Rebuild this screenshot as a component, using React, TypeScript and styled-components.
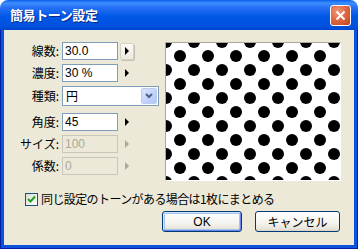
import React from "react";
import styled, { createGlobalStyle } from "styled-components";

const GlobalStyle = createGlobalStyle`
    html, body {
        margin: 0;
        padding: 0;
        background: #ffffff;
    }
    body {
        font-family: "Noto Sans CJK JP", sans-serif;
    }
`;

const Window = styled.div`
    width: 358px;
    height: 249px;
    display: flex;
    flex-direction: column;
    border-radius: 8px 8px 0 0;
    overflow: hidden;
`;

const TitleBar = styled.div`
    height: 30px;
    flex: none;
    display: flex;
    align-items: center;
    justify-content: space-between;
    padding: 0 7px 0 10px;
    box-sizing: border-box;
    background: linear-gradient(
        to bottom,
        #0a5fe6 0%,
        #3b8fff 10%,
        #2770f5 25%,
        #0057e6 55%,
        #0052df 85%,
        #0045cf 100%
    );
    h1 {
        margin: 0;
        font-size: 13px;
        font-weight: 700;
        letter-spacing: -0.4px;
        color: #ffffff;
        line-height: 30px;
        text-shadow: 1px 1px 0 #0a2a8a;
    }
`;

const CloseButton = styled.div`
    width: 21px;
    height: 21px;
    box-sizing: border-box;
    border: 1px solid #ffffff;
    border-radius: 3px;
    background: radial-gradient(circle at 35% 30%, #ee9a7c 0%, #df6a45 45%, #c4421d 100%);
    display: flex;
    align-items: center;
    justify-content: center;
`;

const Frame = styled.div`
    flex: 1;
    display: flex;
    padding: 0 4px 4px;
    background: #0b52dc;
    box-shadow: inset 1px 0 0 #0021a8, inset -1px 0 0 #0021a8, inset 0 -1px 0 #0021a8;
`;

const Client = styled.div`
    flex: 1;
    display: flex;
    flex-direction: column;
    background: #ece9d8;
    padding: 12px 13px 0 10px;
`;

const Body = styled.div`
    display: flex;
    justify-content: space-between;
    align-items: flex-start;
`;

const Form = styled.div`
    display: flex;
    flex-direction: column;
    gap: 4px;
`;

const FieldRow = styled.div<{ $gapTop?: number; $tall?: boolean }>`
    display: grid;
    grid-template-columns: 45px 59px 16px;
    align-items: center;
    height: ${p => (p.$tall ? 20 : 18)}px;
    margin-top: ${p => p.$gapTop || 0}px;
`;

const Label = styled.label`
    text-align: right;
    font-size: 12px;
    line-height: 18px;
    color: #000000;
    white-space: nowrap;
`;

const TextBox = styled.input<{ disabled?: boolean }>`
    justify-self: end;
    width: 56px;
    height: 18px;
    box-sizing: border-box;
    margin: 0;
    padding: 0 2px;
    border: 1px solid ${p => (p.disabled ? "#c9c7ba" : "#7f9db9")};
    background: ${p => (p.disabled ? "#ece9d8" : "#ffffff")};
    color: ${p => (p.disabled ? "#aca899" : "#000000")};
    font-family: "Liberation Sans", Arial, sans-serif;
    font-size: 12px;
    outline: none;
`;

const ArrowButton = styled.span<{ $raised?: boolean; $disabled?: boolean }>`
    justify-self: end;
    width: 14px;
    height: 17px;
    box-sizing: border-box;
    display: flex;
    align-items: center;
    justify-content: center;
    border: 1px solid ${p => (p.$raised ? "#d6d2c2" : "transparent")};
    border-radius: 2px;
    background: ${p => (p.$raised ? "linear-gradient(#fbfbf9, #ebe8dc)" : "transparent")};
    box-shadow: ${p => (p.$raised ? "1px 1px 0 #c3c0b2" : "none")};
    &::after {
        content: "";
        border-left: 4px solid ${p => (p.$disabled ? "#aca899" : "#000000")};
        border-top: 4px solid transparent;
        border-bottom: 4px solid transparent;
    }
`;

const Combo = styled.div`
    grid-column: 2 / span 2;
    justify-self: end;
    margin-right: -25px;
    width: 97px;
    height: 20px;
    box-sizing: border-box;
    border: 1px solid #7f9db9;
    background: #ffffff;
    display: flex;
    align-items: center;
    justify-content: space-between;
    padding: 0 1px 0 3px;
    font-size: 12px;
    span {
        line-height: 18px;
    }
`;

const ComboButton = styled.div`
    width: 16px;
    height: 16px;
    box-sizing: border-box;
    border: 1px solid #bccbf0;
    border-radius: 2px;
    background: linear-gradient(135deg, #dbe5fd 0%, #c0d2fb 60%, #b1c6f6 100%);
    display: flex;
    align-items: center;
    justify-content: center;
`;

const Preview = styled.div`
    width: 176px;
    height: 139px;
    box-sizing: border-box;
    border: 1px solid;
    border-color: #aca899 #ffffff #ffffff #aca899;
    background: #ffffff;
    svg {
        display: block;
    }
`;

const CheckRow = styled.div`
    display: flex;
    align-items: center;
    gap: 3px;
    margin-top: 11px;
    padding-left: 11px;
    font-size: 12px;
    letter-spacing: -0.6px;
    line-height: 14px;
    white-space: nowrap;
`;

const CheckBox = styled.span`
    width: 13px;
    height: 13px;
    box-sizing: border-box;
    border: 1px solid #1c5180;
    background: linear-gradient(135deg, #dcdcd7 0%, #ffffff 100%);
    display: flex;
    align-items: center;
    justify-content: center;
`;

const ButtonRow = styled.div`
    display: flex;
    justify-content: flex-end;
    gap: 13px;
    margin-top: 5px;
    padding-right: 1px;
`;

const PushButton = styled.button<{ $default?: boolean; $width: number }>`
    width: ${p => p.$width}px;
    height: 21px;
    margin: 0;
    padding: 0;
    box-sizing: border-box;
    border: 1px solid #003c74;
    border-radius: 3px;
    background: linear-gradient(to bottom, #ffffff 0%, #f4f3ee 60%, #e6e3d8 90%, #d6d0c5 100%);
    box-shadow: ${p =>
        p.$default ? "inset 1px 1px 0 #cee7ff, inset -1px -1px 0 #6982ee, inset 0 0 0 2px #a6c2f3" : "none"};
    font-family: "Liberation Sans", "Noto Sans CJK JP", sans-serif;
    font-size: 12px;
    color: #000000;
`;

const Dots: React.FC = () => (
    <svg width="174" height="137" viewBox="0 0 174 137">
        <defs>
            <pattern id="tone" x="0" y="-1" width="28" height="28" patternUnits="userSpaceOnUse">
                <circle cx="0" cy="0" r="6" fill="#000" />
                <circle cx="28" cy="0" r="6" fill="#000" />
                <circle cx="0" cy="28" r="6" fill="#000" />
                <circle cx="28" cy="28" r="6" fill="#000" />
                <circle cx="14" cy="14" r="6" fill="#000" />
            </pattern>
        </defs>
        <rect width="174" height="137" fill="url(#tone)" />
    </svg>
);

export default function App() {
    return (
        <>
            <GlobalStyle />
            <Window>
                <TitleBar>
                    <h1>簡易トーン設定</h1>
                    <CloseButton>
                        <svg width="11" height="11" viewBox="0 0 11 11">
                            <path d="M1.5 1.5 L9.5 9.5 M9.5 1.5 L1.5 9.5" stroke="#fff" strokeWidth="2" />
                        </svg>
                    </CloseButton>
                </TitleBar>
                <Frame>
                    <Client>
                        <Body>
                            <Form>
                                <FieldRow>
                                    <Label>線数:</Label>
                                    <TextBox readOnly value="30.0" />
                                    <ArrowButton $raised />
                                </FieldRow>
                                <FieldRow>
                                    <Label>濃度:</Label>
                                    <TextBox readOnly value="30 %" />
                                    <ArrowButton />
                                </FieldRow>
                                <FieldRow $tall>
                                    <Label>種類:</Label>
                                    <Combo>
                                        <span>円</span>
                                        <ComboButton>
                                            <svg width="8" height="6" viewBox="0 0 8 6">
                                                <path d="M1 1 L4 4 L7 1" stroke="#4d6185" strokeWidth="2" fill="none" />
                                            </svg>
                                        </ComboButton>
                                    </Combo>
                                </FieldRow>
                                <FieldRow $gapTop={3}>
                                    <Label>角度:</Label>
                                    <TextBox readOnly value="45" />
                                    <ArrowButton />
                                </FieldRow>
                                <FieldRow>
                                    <Label>サイズ:</Label>
                                    <TextBox disabled value="100" />
                                    <ArrowButton $disabled />
                                </FieldRow>
                                <FieldRow>
                                    <Label>係数:</Label>
                                    <TextBox disabled value="0" />
                                    <ArrowButton $disabled />
                                </FieldRow>
                            </Form>
                            <Preview>
                                <Dots />
                            </Preview>
                        </Body>
                        <CheckRow>
                            <CheckBox>
                                <svg width="9" height="9" viewBox="0 0 9 9">
                                    <path d="M1 4 L3.5 6.5 L8 1.5" stroke="#21a121" strokeWidth="2" fill="none" />
                                </svg>
                            </CheckBox>
                            <span>同じ設定のトーンがある場合は1枚にまとめる</span>
                        </CheckRow>
                        <ButtonRow>
                            <PushButton $default $width={80}>
                                OK
                            </PushButton>
                            <PushButton $width={85}>キャンセル</PushButton>
                        </ButtonRow>
                    </Client>
                </Frame>
            </Window>
        </>
    );
}
